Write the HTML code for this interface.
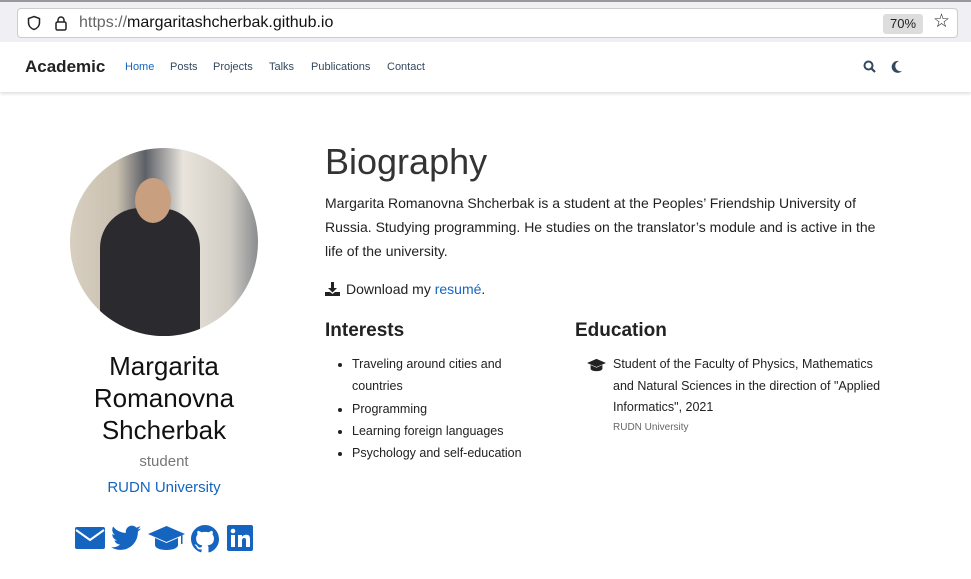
<!DOCTYPE html>
<html><head><meta charset="utf-8"><style>
body{margin:0;width:971px;height:579px;overflow:hidden;background:#fff;font-family:"Liberation Sans",sans-serif;position:relative}
.a{position:absolute;white-space:nowrap}
.bar{position:absolute;left:0;top:0;width:971px;height:42px;background:#f0f0f4;border-top:2px solid #999}
.url{position:absolute;left:17px;top:6px;width:941px;height:30px;background:#fff;border:1px solid #ccc;border-radius:4px;box-sizing:border-box}
.nav{position:absolute;left:0;top:42px;width:971px;height:50px;background:#fff;box-shadow:0 2px 3px rgba(0,0,0,.12)}
.nl{font-size:11px;color:#34495e;top:61px}
.photo{position:absolute;left:70px;top:148px;width:188px;height:188px;border-radius:50%;overflow:hidden;background:linear-gradient(90deg,#d8cfc0 0%,#c9c0b0 25%,#5d6068 40%,#e8e4dc 60%,#d0ccc4 85%,#8a8c90 100%)}
li{margin:0}
.ic{position:absolute;top:525px;fill:#1565c0}
</style></head><body>
<div class="bar"><div class="url">
<svg style="position:absolute;left:8px;top:6px" width="16" height="16" viewBox="0 0 16 16"><path d="M8 1.5l5.5 2v4c0 3.5-2.5 6-5.5 7-3-1-5.5-3.5-5.5-7v-4z" fill="none" stroke="#222" stroke-width="1.5"/></svg>
<svg style="position:absolute;left:36px;top:6px" width="14" height="16" viewBox="0 0 14 16"><rect x="2" y="7" width="10" height="8" rx="1.5" fill="none" stroke="#222" stroke-width="1.5"/><path d="M4 7V5a3 3 0 0 1 6 0v2" fill="none" stroke="#222" stroke-width="1.5"/></svg>
<span class="a" style="left:61px;top:5px;font-size:16px;color:#666">https://<span style="color:#111">margaritashcherbak.github.io</span></span>
<span class="a" style="left:865px;top:5px;width:40px;height:20px;background:#ddd;border-radius:3px;font-size:13px;line-height:20px;text-align:center;color:#222">70%</span>
<span class="a" style="left:915px;top:1px;font-size:19px;color:#222">☆</span>
</div></div>
<div class="nav"></div>
<span class="a" style="left:25px;top:57px;font-size:17px;font-weight:bold;color:#222">Academic</span>
<span class="a nl" style="left:125px;color:#1565c0">Home</span>
<span class="a nl" style="left:170px">Posts</span>
<span class="a nl" style="left:213px">Projects</span>
<span class="a nl" style="left:269px">Talks</span>
<span class="a nl" style="left:311px">Publications</span>
<span class="a nl" style="left:387px">Contact</span>
<svg style="position:absolute;left:863px;top:60px" width="13" height="13" viewBox="0 0 13 13"><circle cx="5.5" cy="5.5" r="4" fill="none" stroke="#34495e" stroke-width="2"/><path d="M8.5 8.5l3.5 3.5" stroke="#34495e" stroke-width="2.2"/></svg>
<svg style="position:absolute;left:891px;top:60px" width="12" height="13" viewBox="0 0 12 13"><path d="M8 1a6 6 0 1 0 3 10A5 5 0 0 1 8 1z" fill="#34495e"/></svg>

<div class="photo"><div style="position:absolute;left:30px;top:60px;width:100px;height:140px;background:#2b2a2e;border-radius:40px 40px 0 0"></div><div style="position:absolute;left:65px;top:30px;width:36px;height:45px;background:#c8a080;border-radius:50%"></div></div>
<div class="a" style="left:60px;top:350px;width:208px;text-align:center;font-size:26px;line-height:32px;color:#111;white-space:normal">Margarita Romanovna Shcherbak</div>
<span class="a" style="left:60px;top:453px;width:208px;text-align:center;font-size:15px;color:#777">student</span>
<span class="a" style="left:60px;top:479px;width:208px;text-align:center;font-size:15px;color:#1565c0">RUDN University</span>
<svg class="ic" style="left:75px" width="30" height="26" viewBox="0 0 30 26"><rect x="0" y="2" width="30" height="22" rx="2"/><path d="M1 5l14 10 14-10" fill="none" stroke="#fff" stroke-width="2"/></svg>
<svg class="ic" style="left:111px" width="30" height="26" viewBox="0 0 24 20"><path d="M24 2.4a10 10 0 0 1-2.8.8 5 5 0 0 0 2.2-2.7 10 10 0 0 1-3.1 1.2A4.9 4.9 0 0 0 11.9 6 14 14 0 0 1 1.7.9a4.9 4.9 0 0 0 1.5 6.6 5 5 0 0 1-2.2-.6 4.9 4.9 0 0 0 3.900 4.9 5 5 0 0 1-2.2.1 4.9 4.9 0 0 0 4.6 3.4A9.9 9.9 0 0 1 0 17.3 14 14 0 0 0 7.5 19.5c9.1 0 14-7.5 14-14v-.6A10 10 0 0 0 24 2.4z"/></svg>
<svg class="ic" style="left:148px" width="37" height="26" viewBox="0 0 37 26"><path d="M18.5 1L0 9l18.5 8L37 9z"/><path d="M7 13v7c0 3 5 5 11.5 5S30 23 30 20v-7l-11.5 5z"/><rect x="33" y="9" width="1.5" height="10"/></svg>
<svg class="ic" style="left:191px" width="28" height="28" viewBox="0 0 16 16"><path d="M8 0C3.580 0 0 3.58 0 8c0 3.54 2.29 6.53 5.47 7.59.4.07.55-.17.55-.38v-1.33c-2.23.48-2.7-1.07-2.7-1.07-.36-.92-.89-1.170-.89-1.17-.73-.5.06-.49.06-.49.8.06 1.23.83 1.23.83.71 1.22 1.87.87 2.33.66.07-.52.28-.87.51-1.07-1.78-.2-3.64-.89-3.64-3.95 0-.87.31-1.59.82-2.15-.08-.2-.36-1.020.08-2.12 0 0 .67-.21 2.2.82a7.6 7.6 0 0 1 4 0c1.53-1.04 2.2-.82 2.2-.82.44 1.1.16 1.92.08 2.12.51.56.82 1.27.82 2.15 0 3.07-1.87 3.75-3.65 3.95.29.25.54.73.54 1.48v2.2c0 .21.15.46.55.38A8 8 0 0 0 16 8c0-4.42-3.58-8-8-8z"/></svg>
<svg class="ic" style="left:227px" width="26" height="26" viewBox="0 0 26 26"><rect width="26" height="26" rx="2"/><rect x="4" y="10" width="4" height="12" fill="#fff"/><circle cx="6" cy="6" r="2.3" fill="#fff"/><path d="M11 10h4v2c1-2 3-2.3 4.5-2.3 3 0 3.5 2 3.5 4.5V22h-4v-6.5c0-1.5-.3-2.5-1.8-2.5S15 14 15 15.5V22h-4z" fill="#fff"/></svg>

<span class="a" style="left:325px;top:141px;font-size:36px;color:#333">Biography</span>
<div class="a" style="left:325px;top:191px;width:570px;white-space:normal;font-size:14px;line-height:24px;color:#222">Margarita Romanovna Shcherbak is a student at the Peoples’ Friendship University of Russia. Studying programming. He studies on the translator’s module and is active in the life of the university.</div>
<svg style="position:absolute;left:325px;top:282px" width="15" height="14" viewBox="0 0 15 14"><path d="M6 0h3v6h3l-4.5 4.5L3 6h3z" fill="#222"/><path d="M0 10h5l2.5 2 2.5-2h5v4H0z" fill="#222"/></svg>
<span class="a" style="left:346px;top:281px;font-size:14px;color:#222">Download my <span style="color:#1565c0">resumé</span>.</span>

<span class="a" style="left:325px;top:320px;font-size:19px;font-weight:bold;color:#222">Interests</span>
<ul class="a" style="left:322px;top:353px;margin:0;padding-left:30px;font-size:12.5px;line-height:22.3px;color:#222;white-space:normal;width:200px">
<li>Traveling around cities and countries</li><li>Programming</li><li>Learning foreign languages</li><li>Psychology and self-education</li></ul>

<span class="a" style="left:575px;top:320px;font-size:19px;font-weight:bold;color:#222">Education</span>
<svg style="position:absolute;left:587px;top:358px" width="19" height="14" viewBox="0 0 37 26"><path d="M18.5 1L0 9l18.5 8L37 9z" fill="#222"/><path d="M7 13v7c0 3 5 5 11.5 5S30 23 30 20v-7l-11.5 5z" fill="#222"/></svg>
<div class="a" style="left:613px;top:354px;width:280px;white-space:normal;font-size:12.5px;line-height:21.5px;color:#222">Student of the Faculty of Physics, Mathematics and Natural Sciences in the direction of "Applied Informatics", 2021</div>
<span class="a" style="left:613px;top:422px;font-size:10px;color:#666">RUDN University</span>
</body></html>
